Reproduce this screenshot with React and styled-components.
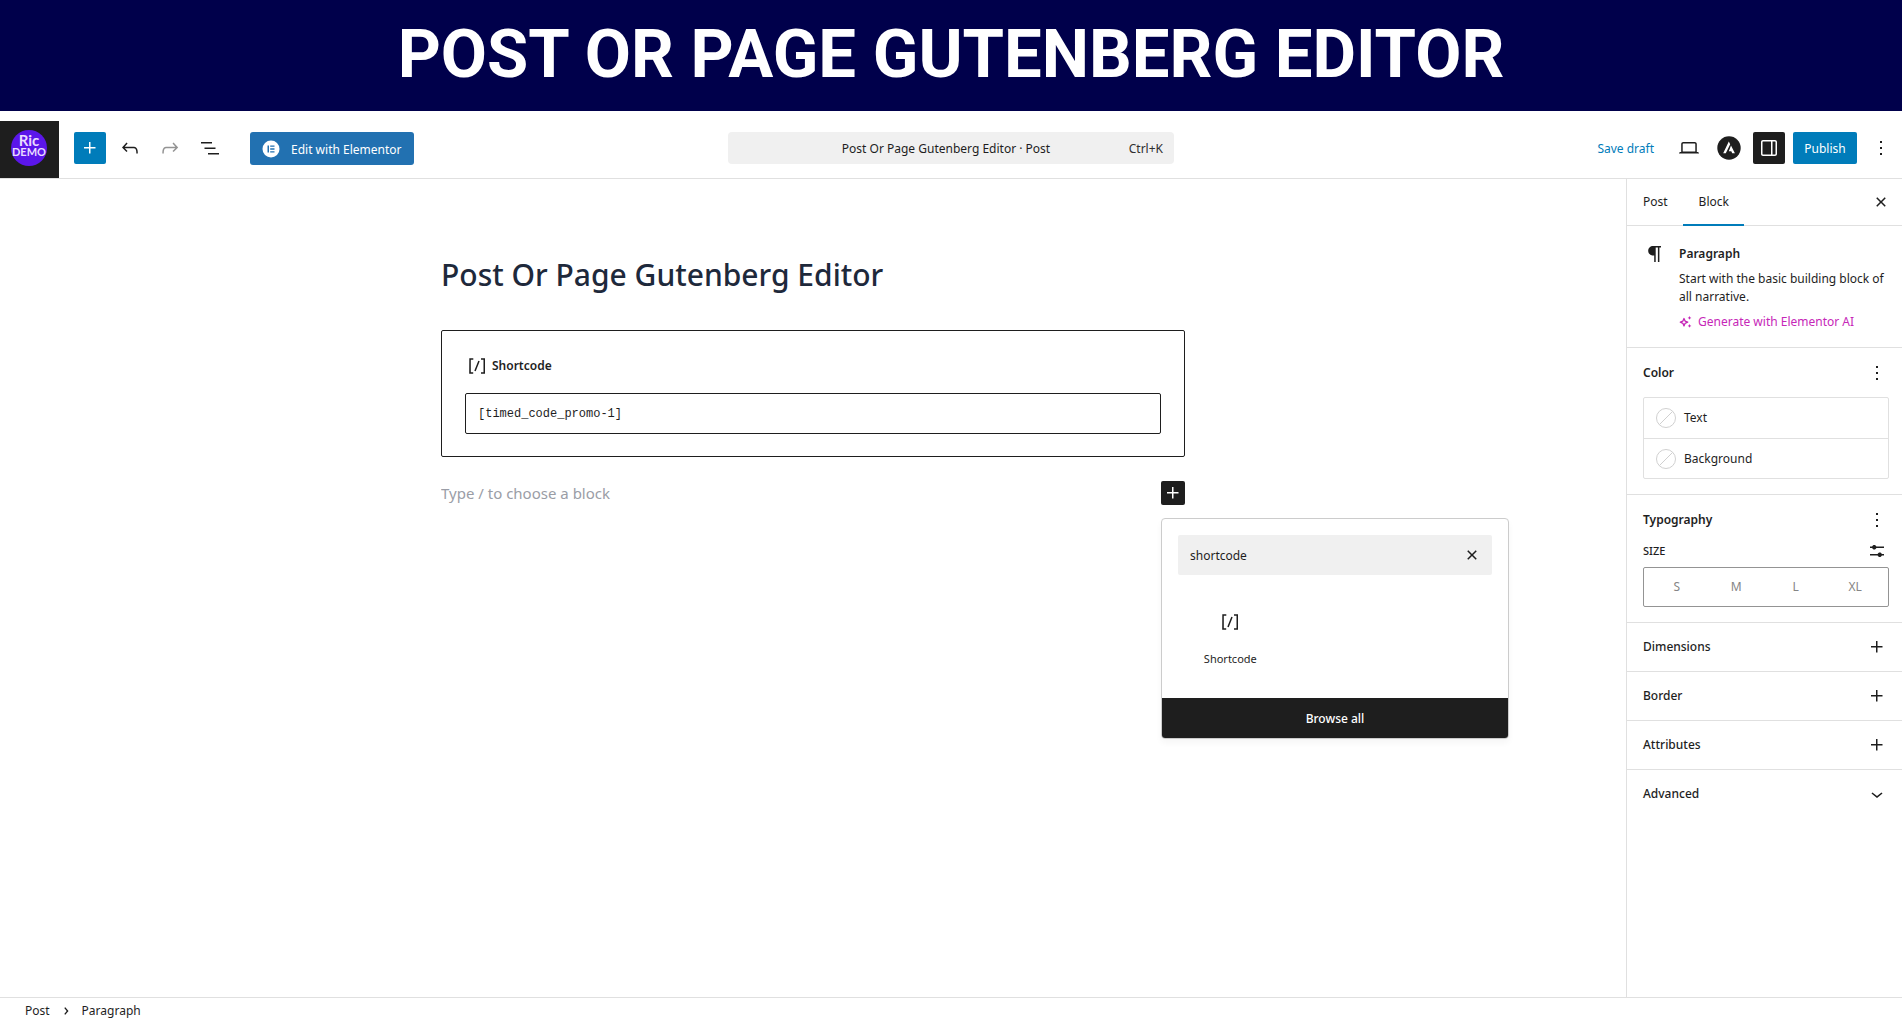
import React, { useState } from "react";
import styled, { createGlobalStyle, ThemeProvider } from "styled-components";

const theme = {
  colors: {
    ink: "#1e1e1e",
    blue: "#007cba",
    elementor: "#2271b1",
    banner: "#00004b",
    line: "#e0e0e0",
    field: "#f0f0f0",
    pink: "#c627b8",
    white: "#ffffff",
  },
};

const icons = {
  plus: "M11 12.5V17.5H12.5V12.5H17.5V11H12.5V6H11V11H6V12.5H11Z",
  undo: "M18.3 11.7c-.6-.6-1.4-.9-2.3-.9H6.7l2.9-3.3-1.1-1-4.5 5L8.5 16l1-1-2.7-2.7H16c.5 0 .9.2 1.3.5 1 1 1 3.4 1 4.5v.3h1.5v-.2c0-1.5 0-4.3-1.5-5.7z",
  redo: "M15.6 6.5l-1.1 1 2.9 3.3H8c-.9 0-1.7.3-2.3.9-1.4 1.5-1.4 4.2-1.4 5.6v.2h1.5v-.3c0-1.1 0-3.5 1-4.5.3-.3.7-.5 1.3-.5h9.2L14.5 15l1.1 1.1 4.6-4.6-4.6-5z",
  list: "M3 6h11v1.5H3V6Zm3.5 5.5h11V13h-11v-1.5ZM21 17H10v1.5h11V17Z",
  desktop:
    "M20.5 16h-.7V8c0-1.1-.9-2-2-2H6.2c-1.1 0-2 .9-2 2v8h-.7c-.8 0-1.5.7-1.5 1.5h20c0-.8-.7-1.5-1.5-1.5zM5.7 8c0-.3.2-.5.5-.5h11.6c.3 0 .5.2.5.5v7.6H5.7V8z",
  drawer:
    "M18 4H6c-1.1 0-2 .9-2 2v12c0 1.1.9 2 2 2h12c1.1 0 2-.9 2-2V6c0-1.1-.9-2-2-2zm-4 14.5H6c-.3 0-.5-.2-.5-.5V6c0-.3.2-.5.5-.5h8v13zm4.5-.5c0 .3-.2.5-.5.5h-2.5v-13H18c.3 0 .5.2.5.5v12z",
  more: "M13 19h-2v-2h2v2zm0-6h-2v-2h2v2zm0-6h-2V5h2v2z",
  close:
    "M12 13.06l3.712 3.713 1.061-1.06L13.061 12l3.712-3.712-1.06-1.06L12 10.938 8.288 7.227l-1.061 1.06L10.939 12l-3.712 3.712 1.06 1.061L12 13.061z",
  paragraph:
    "M10.2 4H18v1.5h-1.6V20h-1.5V5.5h-2.2V20h-1.5v-6.5h-1C7.300 13.500 5.200 11.500 5.200 8.800S7.300 4 10.200 4z",
  shortcode:
    "M16 4.2v1.5h2.5v12.5H16v1.5h4V4.2h-4zM4.2 19.8h4v-1.5H5.8V5.8h2.5V4.2h-4l-.1 15.6zm5.1-3.1l1.4.6 4-10-1.4-.6-4 10z",
  sliders:
    "m19 7.500h-7.628c-.309-.874-1.142-1.500-2.122-1.500s-1.813.626-2.122 1.500H5V9h2.128c.309.874 1.142 1.500 2.122 1.500s1.813-.626 2.122-1.500H19zM19 15h-2.128c-.309-.874-1.142-1.500-2.122-1.500s-1.813.626-2.122 1.500H5v1.500h7.628c.309.874 1.142 1.500 2.122 1.500s1.813-.626 2.122-1.500H19z",
  chevron: "M17.5 11.6L12 16l-5.500-4.400.9-1.200L12 14l4.500-3.600 1 1.200z",
  chevronRight: "M10.800 5.500L9 7l4.200 5L9 17l1.800 1.500 5.500-6.500z",
};

const Icon = ({ name, size = 24 }) => (
  <svg
    width={size}
    height={size}
    viewBox="0 0 24 24"
    fill="currentColor"
    aria-hidden="true"
  >
    <path d={icons[name]} />
  </svg>
);

const ElementorIcon = () => (
  <svg width="18" height="18" viewBox="0 0 18 18" aria-hidden="true">
    <circle cx="9" cy="9" r="8.500" fill="#fff" />
    <path
      d="M5.500 5.500h1.500v7H5.500zM8.200 5.500h4.300v1.300H8.200zM8.200 8.300h4.300v1.400H8.200zM8.200 11.200h4.300v1.300H8.200z"
      fill="#2271b1"
    />
  </svg>
);

const AstraIcon = () => (
  <svg width="24" height="24" viewBox="0 0 24 24" aria-hidden="true">
    <circle cx="12" cy="12" r="11.700" fill="#1e1e1e" />
    <path
      d="M11.800 5.500l1.400 2.800-4.400 8.900H6.200zM14 9.600l3.900 7.600h-2.700l-.9-2h-2.500z"
      fill="#fff"
    />
  </svg>
);

const SparkleIcon = () => (
  <svg width="14" height="14" viewBox="0 0 14 14" aria-hidden="true">
    <path
      d="M5 3.500l1.100 2.600 2.600 1.100-2.600 1.100L5 10.900 3.900 8.300 1.300 7.200l2.600-1.100z"
      fill="none"
      stroke="currentColor"
      strokeWidth="1.300"
      strokeLinejoin="round"
    />
    <path
      d="M10.500 1l.6 1.300 1.300.6-1.300.6-.6 1.300-.6-1.300-1.300-.6 1.300-.6zM10.500 9l.6 1.300 1.300.6-1.300.6-.6 1.300-.6-1.300-1.300-.6 1.300-.6z"
      fill="currentColor"
    />
  </svg>
);

const panels = ["Dimensions", "Border", "Attributes"];
const sizes = ["S", "M", "L", "XL"];

const Toolbar = () => (
  <StyledHeader>
    <StyledGroup>
      <StyledSiteLink href="#dashboard" aria-label="Ric DEMO">
        <StyledSiteLogo>
          <span>Ric</span>
          <small>DEMO</small>
        </StyledSiteLogo>
      </StyledSiteLink>
      <StyledTools>
        <StyledIconButton $tone="blue" aria-label="Add block">
          <Icon name="plus" />
        </StyledIconButton>
        <StyledIconButton aria-label="Undo">
          <Icon name="undo" />
        </StyledIconButton>
        <StyledIconButton aria-label="Redo" disabled>
          <Icon name="redo" />
        </StyledIconButton>
        <StyledIconButton aria-label="Document overview">
          <Icon name="list" />
        </StyledIconButton>
      </StyledTools>
      <StyledElementorButton>
        <ElementorIcon />
        <span>Edit with Elementor</span>
      </StyledElementorButton>
    </StyledGroup>
    <StyledDocumentBar>
      <StyledDocumentName>Post Or Page Gutenberg Editor · Post</StyledDocumentName>
      <StyledShortcut>Ctrl+K</StyledShortcut>
    </StyledDocumentBar>
    <StyledActions>
      <StyledTextButton>Save draft</StyledTextButton>
      <StyledIconButton aria-label="Preview">
        <Icon name="desktop" />
      </StyledIconButton>
      <StyledIconButton aria-label="Astra settings">
        <AstraIcon />
      </StyledIconButton>
      <StyledIconButton $tone="ink" aria-label="Settings">
        <Icon name="drawer" />
      </StyledIconButton>
      <StyledPublish>Publish</StyledPublish>
      <StyledIconButton aria-label="Options">
        <Icon name="more" />
      </StyledIconButton>
    </StyledActions>
  </StyledHeader>
);

const Inserter = () => {
  const [query, setQuery] = useState("shortcode");
  return (
    <StyledPopover>
      <StyledSearch>
        <input
          aria-label="Search"
          value={query}
          onChange={(e) => setQuery(e.target.value)}
        />
        <StyledSmallButton aria-label="Reset search" onClick={() => setQuery("")}>
          <Icon name="close" />
        </StyledSmallButton>
      </StyledSearch>
      <StyledResults>
        <StyledBlockItem>
          <Icon name="shortcode" />
          Shortcode
        </StyledBlockItem>
      </StyledResults>
      <StyledBrowseAll>Browse all</StyledBrowseAll>
    </StyledPopover>
  );
};

const Canvas = () => (
  <StyledCanvas>
    <StyledContent>
      <StyledTitle>Post Or Page Gutenberg Editor</StyledTitle>
      <StyledShortcode>
        <StyledShortcodeLabel htmlFor="shortcode">
          <Icon name="shortcode" />
          Shortcode
        </StyledShortcodeLabel>
        <StyledShortcodeInput id="shortcode" defaultValue="[timed_code_promo-1]" />
      </StyledShortcode>
      <StyledAppender>
        <StyledAppenderInput
          aria-label="Add default block"
          placeholder="Type / to choose a block"
        />
        <StyledInserterAnchor>
          <StyledInserterToggle aria-label="Add block">
            <Icon name="plus" />
          </StyledInserterToggle>
          <Inserter />
        </StyledInserterAnchor>
      </StyledAppender>
    </StyledContent>
  </StyledCanvas>
);

const Sidebar = () => (
  <StyledSidebar>
    <StyledTabs>
      <StyledTab>Post</StyledTab>
      <StyledTab $active>Block</StyledTab>
      <StyledTabsClose>
        <StyledSmallButton aria-label="Close settings">
          <Icon name="close" />
        </StyledSmallButton>
      </StyledTabsClose>
    </StyledTabs>
    <StyledBlockCard>
      <Icon name="paragraph" />
      <div>
        <h2>Paragraph</h2>
        <p>Start with the basic building block of all narrative.</p>
        <StyledAiButton>
          <SparkleIcon />
          Generate with Elementor AI
        </StyledAiButton>
      </div>
    </StyledBlockCard>
    <StyledPanel>
      <StyledPanelHead>
        <h2>Color</h2>
        <StyledSmallButton aria-label="Color options">
          <Icon name="more" />
        </StyledSmallButton>
      </StyledPanelHead>
      <StyledColorList>
        {["Text", "Background"].map((e) => (
          <StyledColorButton key={e}>
            <StyledSwatch viewBox="0 0 20 20" aria-hidden="true">
              <circle cx="10" cy="10" r="9.500" />
              <path d="M3.500 16.500l13-13" />
            </StyledSwatch>
            {e}
          </StyledColorButton>
        ))}
      </StyledColorList>
    </StyledPanel>
    <StyledPanel>
      <StyledPanelHead>
        <h2>Typography</h2>
        <StyledSmallButton aria-label="Typography options">
          <Icon name="more" />
        </StyledSmallButton>
      </StyledPanelHead>
      <StyledSizeHead>
        <span>SIZE</span>
        <StyledSmallButton aria-label="Set custom size">
          <Icon name="sliders" />
        </StyledSmallButton>
      </StyledSizeHead>
      <StyledSizes>
        {sizes.map((e) => (
          <StyledSize key={e}>{e}</StyledSize>
        ))}
      </StyledSizes>
    </StyledPanel>
    {panels.map((e) => (
      <StyledPanelToggle key={e}>
        {e}
        <Icon name="plus" />
      </StyledPanelToggle>
    ))}
    <StyledPanelToggle>
      Advanced
      <Icon name="chevron" />
    </StyledPanelToggle>
  </StyledSidebar>
);

const App = () => (
  <ThemeProvider theme={theme}>
    <GlobalStyle />
    <StyledPage>
      <StyledBanner>POST OR PAGE GUTENBERG EDITOR</StyledBanner>
      <Toolbar />
      <StyledBody>
        <Canvas />
        <Sidebar />
      </StyledBody>
      <StyledFooter aria-label="Block breadcrumb">
        <button>Post</button>
        <Icon name="chevronRight" size={14} />
        <button>Paragraph</button>
      </StyledFooter>
    </StyledPage>
  </ThemeProvider>
);

export default App;

const GlobalStyle = createGlobalStyle`
  * {
    box-sizing: border-box;
  }

  body {
    margin: 0;
    background: #fff;
    color: #1e1e1e;
    font-family: "Noto Sans", sans-serif;
    font-size: 12px;
    line-height: 18px;
  }

  h1, h2, p {
    margin: 0;
  }

  button, input {
    margin: 0;
    padding: 0;
    border: 0;
    background: none;
    color: inherit;
    font: inherit;
  }

  button {
    cursor: pointer;
  }

  svg {
    display: block;
    flex: none;
  }
`;

const StyledPage = styled.div`
  display: flex;
  flex-direction: column;
  min-height: 100vh;
`;

const StyledBanner = styled.div`
  padding: 14px 24px 17px;
  margin-bottom: 10px;
  background: ${(props) => props.theme.colors.banner};
  color: ${(props) => props.theme.colors.white};
  font-family: Roboto, sans-serif;
  font-size: 67px;
  font-weight: 700;
  line-height: 80px;
  text-align: center;
`;

const StyledHeader = styled.header`
  display: grid;
  grid-template-columns: 1fr minmax(200px, 446px) 1fr;
  border-bottom: 1px solid ${(props) => props.theme.colors.line};
`;

const StyledGroup = styled.div`
  display: flex;
  align-items: flex-start;
`;

const StyledSiteLink = styled.a`
  display: flex;
  align-items: center;
  justify-content: center;
  width: 59px;
  height: 57px;
  padding: 0 1px 3px 0;
  background: ${(props) => props.theme.colors.ink};
  text-decoration: none;
`;

const StyledSiteLogo = styled.span`
  display: flex;
  flex-direction: column;
  align-items: center;
  width: 36px;
  height: 36px;
  padding-top: 3px;
  border-radius: 50%;
  background: #5b16ea;
  color: #e9dcff;
  font-family: Lato, sans-serif;
  font-weight: 700;
  font-size: 15px;
  line-height: 14px;

  small {
    font-size: 11px;
    line-height: 10px;
  }
`;

const StyledTools = styled.div`
  display: flex;
  gap: 8px;
  padding: 11px 24px 0 15px;
`;

const StyledIconButton = styled.button`
  display: flex;
  align-items: center;
  justify-content: center;
  width: 32px;
  height: 32px;
  border-radius: 2px;
  background: ${(props) =>
    props.$tone ? props.theme.colors[props.$tone] : "transparent"};
  color: ${(props) => (props.$tone ? "#fff" : props.theme.colors.ink)};

  &:disabled {
    color: #949494;
  }
`;

const StyledElementorButton = styled.button`
  display: flex;
  align-items: center;
  gap: 11px;
  height: 33px;
  margin-top: 11px;
  padding: 0 12px;
  border-radius: 3px;
  background: ${(props) => props.theme.colors.elementor};
  color: ${(props) => props.theme.colors.white};
  white-space: nowrap;

  span {
    padding-top: 2px;
  }
`;

const StyledDocumentBar = styled.button`
  display: grid;
  grid-template-columns: 1fr auto 1fr;
  align-items: center;
  height: 32px;
  margin-top: 11px;
  padding: 2px 11px 0;
  border-radius: 4px;
  background: ${(props) => props.theme.colors.field};
`;

const StyledDocumentName = styled.span`
  grid-column: 2;
  margin-right: 10px;
`;

const StyledShortcut = styled.span`
  color: #2f2f2f;
  text-align: right;
`;

const StyledActions = styled.div`
  display: flex;
  justify-content: flex-end;
  align-items: flex-start;
  gap: 8px;
  padding: 11px 5px 0 0;
`;

const StyledTextButton = styled.button`
  height: 32px;
  padding: 2px 11px 0;
  color: ${(props) => props.theme.colors.blue};
`;

const StyledPublish = styled.button`
  min-width: 64px;
  height: 32px;
  padding: 2px 8px 0;
  border-radius: 2px;
  background: ${(props) => props.theme.colors.blue};
  color: ${(props) => props.theme.colors.white};
`;

const StyledBody = styled.div`
  display: flex;
  flex: 1;
`;

const StyledCanvas = styled.main`
  flex: 1;
  min-width: 0;
`;

const StyledContent = styled.div`
  max-width: 744px;
  margin: 0 auto;
  padding-top: 74px;
`;

const StyledTitle = styled.h1`
  color: #1e293b;
  font-size: 30px;
  font-weight: 500;
  line-height: 44px;
`;

const StyledShortcode = styled.div`
  margin-top: 33px;
  padding: 22px 23px;
  border: 1px solid ${(props) => props.theme.colors.ink};
  border-radius: 2px;
`;

const StyledShortcodeLabel = styled.label`
  display: flex;
  align-items: center;
  gap: 3px;
  height: 26px;
  margin-bottom: 14px;
  font-weight: 600;
`;

const StyledShortcodeInput = styled.input`
  width: 100%;
  height: 41px;
  padding: 0 12px;
  border: 1px solid ${(props) => props.theme.colors.ink};
  border-radius: 2px;
  font-family: "Liberation Mono", monospace;
  font-size: 12px;
`;

const StyledAppender = styled.div`
  display: flex;
  align-items: center;
  margin-top: 22px;
`;

const StyledAppenderInput = styled.input`
  flex: 1;
  height: 28px;
  font-size: 15px;

  &::placeholder {
    color: #9a9da6;
    opacity: 1;
  }
`;

const StyledInserterAnchor = styled.div`
  position: relative;
`;

const StyledInserterToggle = styled.button`
  display: block;
  width: 24px;
  height: 24px;
  border-radius: 2px;
  background: ${(props) => props.theme.colors.ink};
  color: ${(props) => props.theme.colors.white};
`;

const StyledPopover = styled.div`
  position: absolute;
  top: 37px;
  left: 0;
  width: 348px;
  overflow: hidden;
  border: 1px solid #ccc;
  border-radius: 4px;
  background: ${(props) => props.theme.colors.white};
  box-shadow: 0 4px 6px rgba(0, 0, 0, 0.04);
`;

const StyledSearch = styled.div`
  display: flex;
  align-items: center;
  height: 40px;
  margin: 16px 16px 0;
  padding: 0 8px 0 12px;
  border-radius: 2px;
  background: ${(props) => props.theme.colors.field};

  input {
    flex: 1;
    min-width: 0;
    padding-top: 2px;
  }
`;

const StyledSmallButton = styled.button`
  display: flex;
  align-items: center;
  justify-content: center;
  width: 24px;
  height: 24px;
`;

const StyledResults = styled.div`
  display: grid;
  grid-template-columns: repeat(3, 1fr);
  padding: 17px 16px 14px;
`;

const StyledBlockItem = styled.button`
  display: flex;
  flex-direction: column;
  align-items: center;
  gap: 16px;
  padding: 18px 8px 16px;
  font-size: 11px;
`;

const StyledBrowseAll = styled.button`
  display: block;
  width: 100%;
  height: 40px;
  padding-top: 2px;
  background: ${(props) => props.theme.colors.ink};
  color: ${(props) => props.theme.colors.white};
  font-weight: 500;
`;

const StyledSidebar = styled.aside`
  width: 276px;
  border-left: 1px solid ${(props) => props.theme.colors.line};

  h2 {
    font-size: 12px;
    font-weight: 600;
    line-height: 18px;
  }
`;

const StyledTabs = styled.div`
  display: flex;
  height: 47px;
  border-bottom: 1px solid ${(props) => props.theme.colors.line};
`;

const StyledTab = styled.button`
  height: 47px;
  padding: 0 15px 0 16px;
  border-bottom: 2px solid
    ${(props) => (props.$active ? props.theme.colors.blue : "transparent")};
`;

const StyledTabsClose = styled.div`
  display: flex;
  align-items: center;
  margin-left: auto;
  padding-right: 9px;
`;

const StyledBlockCard = styled.div`
  display: flex;
  gap: 12px;
  padding: 16px 14px 16px 16px;

  h2 {
    margin: 3px 0 7px;
  }
`;

const StyledAiButton = styled.button`
  display: flex;
  align-items: center;
  gap: 5px;
  margin-top: 7px;
  color: ${(props) => props.theme.colors.pink};
`;

const StyledPanel = styled.section`
  padding: 13px 13px 15px 16px;
  border-top: 1px solid ${(props) => props.theme.colors.line};
`;

const StyledPanelHead = styled.div`
  display: flex;
  align-items: center;
  justify-content: space-between;
  height: 24px;
`;

const StyledColorList = styled.div`
  margin-top: 12px;
  border: 1px solid ${(props) => props.theme.colors.line};
  border-radius: 2px;
`;

const StyledColorButton = styled.button`
  display: flex;
  align-items: center;
  gap: 8px;
  width: 100%;
  height: 40px;
  padding: 0 12px;

  & + & {
    border-top: 1px solid ${(props) => props.theme.colors.line};
  }
`;

const StyledSwatch = styled.svg`
  width: 20px;
  height: 20px;
  fill: none;
  stroke: #d0d0d0;
`;

const StyledSizeHead = styled.div`
  display: flex;
  align-items: center;
  justify-content: space-between;
  margin: 7px 0 4px;
  font-size: 11px;
  font-weight: 500;
`;

const StyledSizes = styled.div`
  display: grid;
  grid-template-columns: repeat(4, 1fr);
  height: 40px;
  padding: 0 3px;
  border: 1px solid #949494;
  border-radius: 2px;
`;

const StyledSize = styled.button`
  color: #858585;
`;

const StyledPanelToggle = styled.button`
  display: flex;
  align-items: center;
  justify-content: space-between;
  width: 100%;
  height: 49px;
  padding: 0 13px 0 16px;
  border-top: 1px solid ${(props) => props.theme.colors.line};
  font-weight: 500;
`;

const StyledFooter = styled.nav`
  display: flex;
  align-items: center;
  gap: 9px;
  height: 23px;
  padding: 4px 25px 0;
  border-top: 1px solid ${(props) => props.theme.colors.line};
`;
